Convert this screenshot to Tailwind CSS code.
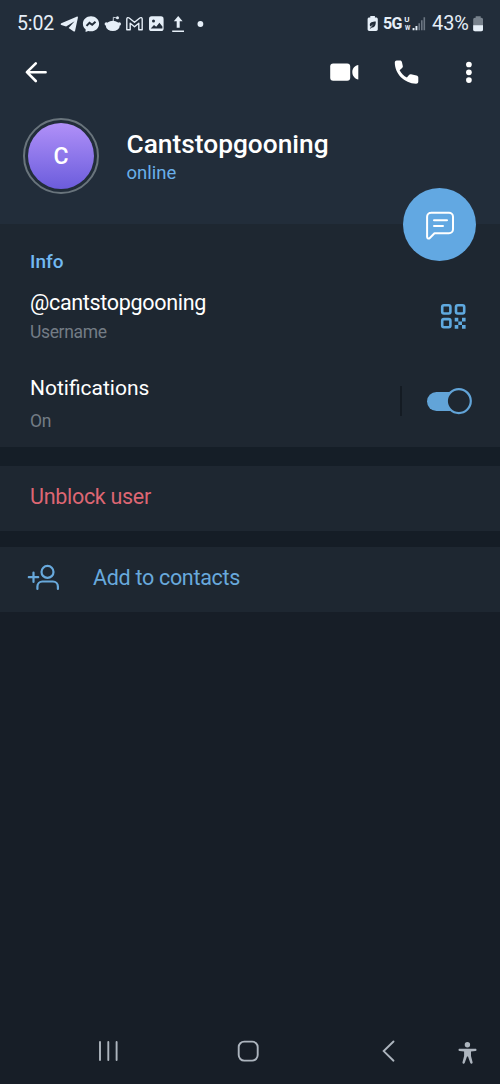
<!DOCTYPE html>
<html lang="en">
<head>
<meta charset="utf-8">
<meta name="viewport" content="width=device-width">
<title>Profile</title>
<script src="https://cdn.jsdelivr.net/npm/@tailwindcss/browser@4"></script>
</head>
<body class="bg-[#171e27] font-['Roboto',sans-serif] text-white">
<main class="flex h-[1084px] w-[500px] flex-col overflow-hidden bg-[#171e27]">
  <header class="h-[224px] shrink-0 bg-[#222d3a]">
    <!-- Status bar -->
    <div class="flex h-12 items-center text-[#e6eff8]">
      <div class="w-[60px] shrink-0 pl-[17px] text-[19.500px] leading-6 tracking-[-0.1px] whitespace-nowrap">5:02</div>
      <svg class="h-6 w-[21px] shrink-0" viewBox="60 12 21 24" fill="currentColor"><path d="M61.300 23.300 76.600 16.700c.8-.3 1.500.2 1.300 1l-2.800 13c-.2.9-.9 1.100-1.700.6L68.600 28l6-6.800-8.500 5.400-4.800-1.600c-.9-.3-.9-1.300 0-1.700z"/></svg>
      <svg class="h-6 w-[21px] shrink-0" viewBox="81 12 21 24"><path fill="currentColor" d="M91 16.200c-4.600 0-8.100 3.300-8.100 7.500 0 2.300 1 4.200 2.700 5.600v2.600l2.600-1c.9.300 1.800.4 2.800.4 4.600 0 8.100-3.300 8.100-7.600s-3.500-7.500-8.100-7.500z"/><path fill="none" stroke="#222d3a" stroke-width="2" d="m86.500 25.900 3-3 2.700 1.900 3.300-3"/></svg>
      <svg class="h-6 w-[22px] shrink-0" viewBox="102 12 22 24" fill="currentColor"><ellipse cx="112.800" cy="25.900" rx="6.900" ry="5.200"/><circle cx="106.300" cy="24" r="1.700"/><circle cx="119.300" cy="24" r="1.700"/><circle cx="117.500" cy="17.800" r="1.500"/><path d="M113.300 21.500v-4.200l3.500.6" fill="none" stroke="currentColor" stroke-width=".8"/></svg>
      <svg class="h-6 w-[22px] shrink-0" viewBox="124 12 22 24" fill="none" stroke="currentColor" stroke-width="1.400" stroke-linejoin="round"><path d="M126.800 29.800V19c0-1.500 1.500-1.700 2.400-1l5.300 4.300 5.300-4.300c.9-.7 2.400-.5 2.400 1v10.800h-3.400v-6.600l-4.300 3.500-4.300-3.500v6.600z"/></svg>
      <svg class="h-6 w-[22px] shrink-0" viewBox="146 12 22 24"><rect x="149" y="16.300" width="14.600" height="14.800" rx="2.600" fill="currentColor"/><circle cx="153.500" cy="20.900" r="1.500" fill="#222d3a"/><path fill="#222d3a" d="m150.700 28.600 3.300-3.700 2.200 1.900 3.200-4.100 3 3.700v2.200z"/></svg>
      <svg class="h-6 w-[22px] shrink-0" viewBox="168 12 22 24" fill="currentColor"><path d="m178.200 16 4.400 5.200h-2.900v6.600h-3v-6.600h-2.900zM172.200 30.400h11.800v1.500h-11.800z"/></svg>
      <svg class="h-6 w-[22px] shrink-0" viewBox="190 12 22 24" fill="currentColor"><circle cx="200.400" cy="24" r="2.900"/></svg>
      <svg class="ml-auto h-6 w-[17px] shrink-0" viewBox="364 12 17 24"><path fill="currentColor" d="M370.300 16h4.600v1.500h1.200c.9 0 1.700.7 1.700 1.600v10.200c0 1-.8 1.700-1.700 1.700h-6.800c-1 0-1.700-.8-1.700-1.700V19.100c0-.9.7-1.600 1.700-1.600h1z"/><path fill="#222d3a" d="M375.800 21.400c-3.500 0-6 .8-6 3.500 0 .9.300 1.400.7 1.700l3.100-2.500-3.900 4.400h1.200l.8-.9c2.900 0 4.100-2.200 4.100-6.200z"/></svg>
      <span class="w-[22px] shrink-0 pl-[2px] text-[16px] leading-6 font-bold tracking-[-0.7px]">5G</span>
      <span class="flex w-[8px] shrink-0 flex-col items-center text-[8px] leading-[8px] font-bold"><span>U</span><span class="scale-x-75">W</span></span>
      <svg class="h-6 w-[19px] shrink-0" viewBox="411 12 19 24" fill="currentColor"><path d="M412.600 28h1.900v2.300h-1.900zM415.500 26h1.900v4.300h-1.900z"/><path opacity=".38" d="M418.400 23.200h1.600v7.100h-1.600zM421 20.200h1.600v10.100H421zM423.500 17.300h1.600v13h-1.600z"/></svg>
      <span class="w-[41px] shrink-0 pl-[2px] text-[19.900px] leading-6">43%</span>
      <svg class="mr-[13px] h-6 w-[16px] shrink-0" viewBox="471 12 16 24"><path fill="#78828d" d="M475.700 16.300h5v1.500h.6c1 0 1.700.8 1.700 1.700v10c0 1-.7 1.700-1.700 1.700h-6.400c-1 0-1.700-.7-1.700-1.700v-10c0-.9.7-1.700 1.700-1.700h.8z"/><path fill="currentColor" d="M473.200 25.300h9.800v4.200c0 1-.7 1.700-1.700 1.700h-6.400c-1 0-1.700-.7-1.700-1.700z"/></svg>
    </div>
    <!-- Toolbar -->
    <div class="flex h-12 items-center">
      <svg class="ml-5 h-8 w-8" viewBox="20 56 32 32" fill="none" stroke="white" stroke-width="2.600" stroke-linecap="round" stroke-linejoin="round"><path d="M45.600 72.200H27M35.800 63.400 26.900 72.200l8.900 8.800"/></svg>
      <svg class="ml-auto h-8 w-9" viewBox="326 56 36 32" fill="white"><rect x="330.200" y="63.600" width="20" height="17.200" rx="3"/><path d="M358.300 65v14.400c-3.200-.3-6-3.500-6-7.200s2.800-6.900 6-7.200z"/></svg>
      <svg class="ml-7 h-8 w-8" viewBox="390 56 32 32" fill="white"><path d="M396.700 60.500h3.300c1 0 1.700.6 1.900 1.600l.9 4c.2.800-.1 1.500-.7 2l-2.500 2.100c1.800 3.300 4.100 5.600 7.300 7.400l2.100-2.600c.5-.6 1.200-.9 2-.7l5.500 1.200c1 .2 1.800 1 1.800 2v4c0 1.300-1 2.300-2.200 2.300-12-.4-21.300-10-21.300-21.200 0-1.300.9-2.100 1.900-2.100z"/></svg>
      <svg class="mr-[15px] ml-[31px] h-8 w-8" viewBox="453 56 32 32" fill="white"><circle cx="468.900" cy="64.500" r="2.850"/><circle cx="468.900" cy="72.300" r="2.850"/><circle cx="468.900" cy="80.100" r="2.850"/></svg>
    </div>
    <div class="flex pt-[22px] pl-[23px]">
      <div class="flex size-[76px] shrink-0 items-center justify-center rounded-full border-2 border-[#69747c]">
        <div class="flex size-[66px] items-center justify-center rounded-full bg-linear-to-b from-[#b190f8] to-[#6c5cdc] pt-[2px] text-[23px] font-medium">C</div>
      </div>
      <div class="pt-[11px] pl-[27.500px]">
        <h1 class="text-[26.300px] leading-[30px] font-medium whitespace-nowrap">Cantstopgooning</h1>
        <p class="pt-[2px] text-[18.500px] leading-6 text-[#69afea]">online</p>
      </div>
    </div>
  </header>

  <section class="relative h-[223px] shrink-0 bg-[#1e2731] pl-[30px]">
    <button class="absolute top-[-36px] left-[403px] size-[73px] rounded-full bg-[#62a8e2]" aria-label="Message">
      <svg class="size-[73px]" viewBox="403 188 73 73" fill="none" stroke="white" stroke-width="2" stroke-linecap="round" stroke-linejoin="round"><path d="M431 212.800h18a4 4 0 0 1 4 4v12.500a4 4 0 0 1-4 4h-14.500l-4.700 4.700c-1 1-2.700.5-2.700-1v-20.200a4 4 0 0 1 4-4zM434 220.300h13M434 226h9"/></svg>
    </button>
    <h2 class="pt-[26px] text-[19px] leading-6 font-medium text-[#72b9f1]">Info</h2>
    <div class="flex h-[85px] items-start">
      <div class="pt-[16px]">
        <div class="text-[21.500px] leading-[26px] tracking-[-0.32px]">@cantstopgooning</div>
        <div class="pt-[4px] text-[17.500px] leading-6 tracking-[-0.35px] text-[#737c85]">Username</div>
      </div>
      <svg class="mt-[26px] mr-[30px] ml-auto h-8 w-8" viewBox="438 300 32 32" fill="none" stroke="#5fa9df" stroke-width="2.600"><rect x="442.200" y="305.300" width="8.200" height="8.200" rx="1.700"/><rect x="456" y="305.300" width="8.200" height="8.200" rx="1.700"/><rect x="442.200" y="319.100" width="8.200" height="8.200" rx="1.700"/><path fill="#5fa9df" stroke="none" d="M454.700 317.800h3.600v3.600h-3.600zM462 317.800h3.600v3.600H462zM458.300 321.400h3.700v3.700h-3.700zM454.700 325.100h3.600v3.600h-3.600zM462 325.100h3.600v3.600H462z"/></svg>
    </div>
    <div class="flex">
      <div class="pt-[16px]">
        <div class="text-[21px] leading-[26px]">Notifications</div>
        <div class="pt-[8px] text-[17.500px] leading-6 tracking-[-0.35px] text-[#737c85]">On</div>
      </div>
      <div class="mt-[27px] ml-auto h-[30px] w-[2px] bg-[#141b23]"></div>
      <svg class="mt-[26px] mr-[24px] ml-[22px] h-8 w-[52px]" viewBox="424 385 52 32"><rect x="427" y="392" width="36" height="19" rx="9.500" fill="#62a4d8"/><circle cx="458.800" cy="401.100" r="12" fill="#1e2731" stroke="#62a4d8" stroke-width="2.200"/></svg>
    </div>
  </section>

  <div class="h-[19px] shrink-0 bg-[#151e27]"></div>
  <section class="h-[65px] shrink-0 bg-[#1e2731] pt-[18px] pl-[30px] text-[21.500px] leading-[26px] tracking-[-0.3px] text-[#dd6673]">Unblock user</section>

  <div class="h-4 shrink-0 bg-[#151d26]"></div>
  <section class="flex h-[65px] shrink-0 items-center bg-[#1e2731] text-[#68a9dc]">
    <svg class="ml-6 h-10 w-10" viewBox="24 559 40 40" fill="none" stroke="currentColor" stroke-width="2.200" stroke-linecap="round"><circle cx="47.500" cy="570.900" r="6"/><path d="M37.400 588v-2.500c0-2.800 2.200-5 5-5h10.500c2.800 0 5 2.200 5 5v2.500M33.500 571.500v9.400M28.800 576.200h9.400"/></svg>
    <span class="ml-[29px] pb-[3px] text-[21.500px] leading-[26px] tracking-[-0.3px]">Add to contacts</span>
  </section>

  <nav class="mt-auto flex h-16 shrink-0 items-center text-[#adb5be]">
    <svg class="ml-[92px] h-8 w-8" viewBox="92 1036 32 32" stroke="currentColor" stroke-width="1.900" stroke-linecap="round"><path d="M100 1042v18M108.300 1042v18M116.600 1042v18"/></svg>
    <svg class="ml-[108px] h-8 w-8" viewBox="232 1036 32 32" fill="none" stroke="currentColor" stroke-width="1.900"><rect x="238.700" y="1041.600" width="19" height="19" rx="5.500"/></svg>
    <svg class="ml-[108px] h-8 w-8" viewBox="372 1036 32 32" fill="none" stroke="currentColor" stroke-width="1.900" stroke-linecap="round"><path d="m393.500 1041.500-9.800 9.600 9.800 9.600"/></svg>
    <svg class="ml-[48px] h-8 w-8" viewBox="452 1036 32 32" fill="currentColor"><circle cx="467.400" cy="1044.800" r="2.700"/><path d="M459.500 1048.800h16c.6 0 1 .4 1 1.100s-.4 1.100-1 1.200l-4.500.4v4.500l1.600 6.300c.3 1.500-1.700 2.100-2.300.7l-2.300-6.400h-1l-2.300 6.400c-.6 1.400-2.600.8-2.200-.7l1.600-6.300v-4.500l-4.600-.4c-.6-.1-1-.5-1-1.200s.4-1.100 1-1.100z"/></svg>
  </nav>
</main>
</body>
</html>
